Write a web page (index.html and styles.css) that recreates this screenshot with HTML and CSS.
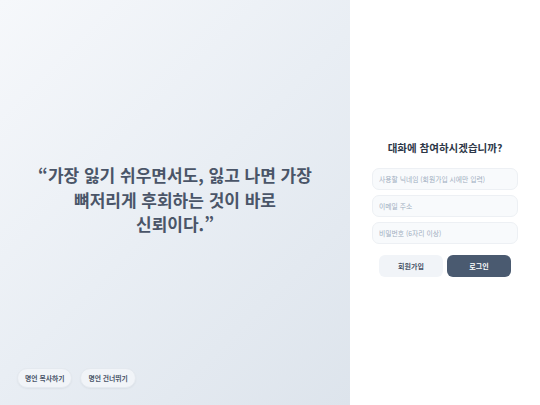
FILE: index.html
```html
<!DOCTYPE html>
<html lang="ko">
<head>
<meta charset="utf-8">
<link rel="stylesheet" href="styles.css">
</head>
<body>
<div class="page">
  <section class="hero">
    <div class="quote-wrap">
      <p class="quote">“가장 잃기 쉬우면서도, 잃고 나면 가장 뼈저리게 후회하는 것이 바로 신뢰이다.”</p>
    </div>
    <div class="actions">
      <button class="pill">명언 복사하기</button>
      <button class="pill">명언 건너뛰기</button>
    </div>
  </section>
  <aside class="panel">
    <div class="form">
      <h2 class="title">대화에 참여하시겠습니까?</h2>
      <input class="field" placeholder="사용할 닉네임 (회원가입 시에만 입력)">
      <input class="field" placeholder="이메일 주소">
      <input class="field" placeholder="비밀번호 (6자리 이상)">
      <div class="buttons">
        <button class="btn btn-light">회원가입</button>
        <button class="btn btn-dark">로그인</button>
      </div>
    </div>
  </aside>
</div>
</body>
</html>
```
FILE: styles.css
```css
* { box-sizing: border-box; }
html, body { margin: 0; padding: 0; }
body {
  font-family: "Noto Sans CJK KR", "Noto Sans", sans-serif;
  width: 540px;
  height: 405px;
  overflow: hidden;
}
.page {
  display: flex;
  height: 405px;
}
.hero {
  width: 350px;
  flex: none;
  display: flex;
  flex-direction: column;
  background: linear-gradient(135deg, #f6f8fb 0%, #e9eef4 50%, #dde4ec 100%);
  padding: 0 17px 17px;
}
.quote-wrap {
  flex: 1;
  display: flex;
  align-items: center;
  justify-content: center;
  padding-top: 32px;
}
.quote {
  margin: 0;
  text-align: center;
  font-size: 17px;
  line-height: 24.5px;
  font-weight: 700;
  color: #4a5568;
  width: 276px;
  word-break: keep-all;
}
.actions {
  display: flex;
  gap: 8px;
}
.pill {
  font-family: inherit;
  font-size: 6.8px;
  font-weight: 700;
  color: #4a5568;
  background: #f1f4f8;
  border: 1px solid #e4e9ef;
  border-radius: 10px;
  height: 20px;
  padding: 0 7px;
  box-shadow: 0 1px 2px rgba(0,0,0,0.05);
}
.panel {
  flex: 1;
  background: #fff;
  display: flex;
  align-items: center;
  justify-content: center;
  padding: 0 22px 0 22px;
}
.form {
  width: 146px;
  display: flex;
  flex-direction: column;
  gap: 5px;
  margin-top: 11px;
}
.title {
  margin: 0 0 7px;
  text-align: center;
  font-size: 10.5px;
  font-weight: 700;
  color: #2d3748;
  line-height: 16px;
}
.field {
  font-family: inherit;
  height: 22px;
  border: 1px solid #edf0f4;
  background: #f8fafc;
  border-radius: 7px;
  padding: 0 6px;
  font-size: 6.8px;
  color: #4a5568;
  outline: none;
}
.field::placeholder { color: #a0aec0; }
.buttons {
  display: flex;
  gap: 4px;
  padding: 0 7px;
  margin-top: 6px;
}
.btn {
  flex: 1;
  height: 22px;
  border-radius: 6px;
  border: none;
  font-family: inherit;
  font-size: 7px;
  font-weight: 700;
}
.btn-light { background: #f1f4f8; color: #4a5568; }
.btn-dark { background: #4a5a70; color: #fff; }
```
